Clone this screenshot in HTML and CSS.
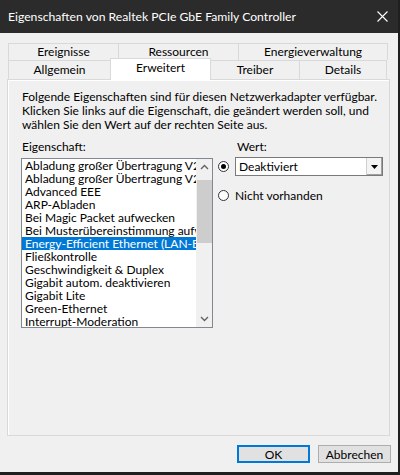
FILE: index.html
```html
<!DOCTYPE html>
<html lang="de">
<head>
  <meta charset="UTF-8" />
  <title>Eigenschaften von Realtek PCIe GbE Family Controller</title>
  <link rel="stylesheet" href="styles.css">
</head>
<body>
  <div class="window">

    <!-- TITLE BAR -->
    <div class="titlebar">
      <span class="title">Eigenschaften von Realtek PCIe GbE Family Controller</span>
      <svg class="close" width="11" height="11" viewBox="0 0 11 11">
        <path d="M0.5 0.5 L10.5 10.5 M10.5 0.5 L0.5 10.5" stroke="#fff" stroke-width="1.1" fill="none"/>
      </svg>
    </div>

    <div class="content">
      <!-- TABS -->
      <div class="tabs">
        <div class="tab-row row-back">
          <div class="tab" style="width:110px">Ereignisse</div>
          <div class="tab" style="width:120px">Ressourcen</div>
          <div class="tab last" style="width:150px">Energieverwaltung</div>
        </div>
        <div class="tab-row row-front">
          <div class="tab" style="width:102px">Allgemein</div>
          <div class="tab selected" style="width:101px">Erweitert</div>
          <div class="tab" style="width:89px">Treiber</div>
          <div class="tab last" style="width:88px">Details</div>
        </div>
      </div>

      <!-- PAGE -->
      <div class="panel">
        <p class="desc">Folgende Eigenschaften sind für diesen Netzwerkadapter verfügbar.<br>
Klicken Sie links auf die Eigenschaft, die geändert werden soll, und<br>
wählen Sie den Wert auf der rechten Seite aus.</p>

        <div class="props">
          <div class="col-left">
            <div class="label">Eigenschaft:</div>
            <div class="listbox">
              <ul class="items">
                <li>Abladung großer Übertragung V2 (IPv4)</li>
                <li>Abladung großer Übertragung V2 (IPv6)</li>
                <li>Advanced EEE</li>
                <li>ARP-Abladen</li>
                <li>Bei Magic Packet aufwecken</li>
                <li>Bei Musterübereinstimmung aufwecken</li>
                <li class="sel">Energy-Efficient Ethernet (LAN-Energiesparmodus)</li>
                <li>Fließkontrolle</li>
                <li>Geschwindigkeit &amp; Duplex</li>
                <li>Gigabit autom. deaktivieren</li>
                <li>Gigabit Lite</li>
                <li>Green-Ethernet</li>
                <li>Interrupt-Moderation</li>
              </ul>
              <div class="scrollbar">
                <svg class="arrow" width="9" height="6" viewBox="0 0 9 6">
                  <path d="M1 5 L4.5 1.5 L8 5" stroke="#606060" stroke-width="1.3" fill="none"/>
                </svg>
                <div class="track"><div class="thumb"></div></div>
                <svg class="arrow" width="9" height="6" viewBox="0 0 9 6">
                  <path d="M1 1 L4.5 4.5 L8 1" stroke="#606060" stroke-width="1.3" fill="none"/>
                </svg>
              </div>
            </div>
          </div>

          <div class="col-right">
            <div class="label value-label">Wert:</div>
            <div class="option">
              <span class="radio checked"></span>
              <div class="combo">
                <span class="combo-text">Deaktiviert</span>
                <span class="combo-btn">
                  <svg width="7" height="4" viewBox="0 0 7 4"><path d="M0 0 H7 L3.5 4 Z" fill="#000"/></svg>
                </span>
              </div>
            </div>
            <div class="option second">
              <span class="radio"></span>
              <span>Nicht vorhanden</span>
            </div>
          </div>
        </div>
      </div>

      <!-- BUTTONS -->
      <div class="buttons">
        <button class="btn default">OK</button>
        <button class="btn">Abbrechen</button>
      </div>
    </div>
  </div>
</body>
</html>
```

FILE: styles.css
```css
/* BASE */
*, *::before, *::after { box-sizing: border-box; }
body {
  margin: 0;
  background: #1f1f1f;
  font-family: "Segoe UI", Lato, sans-serif;
  font-size: 12px;
  color: #000;
}

.window {
  width: 398px;
  height: 472px;
  background: #f0f0f0;
  display: flex;
  flex-direction: column;
}

/* TITLE BAR */
.titlebar {
  height: 33px;
  flex-shrink: 0;
  background: #2b2b2b;
  color: #fff;
  display: flex;
  align-items: center;
  justify-content: space-between;
  padding: 0 10px 0 8px;
  font-size: 12.2px;
}

.content {
  flex: 1;
  display: flex;
  flex-direction: column;
  padding: 10px 7px 0 7px;
}

/* TABS */
.tabs { margin-left: 1px; }
.tab-row { display: flex; }
.row-back { height: 17px; }
.row-front { height: 19px; }
.tab {
  border: 1px solid #d9d9d9;
  border-right: none;
  border-bottom: none;
  background: #f0f0f0;
  text-align: center;
  line-height: 16px;
}
.row-front .tab { line-height: 18px; }
.tab.last { border-right: 1px solid #d9d9d9; }
.tab.selected {
  position: relative;
  z-index: 1;
  align-self: flex-start;
  height: 22px;
  margin-top: -2px;
  background: #fff;
  border-right: 1px solid #d9d9d9;
  margin-right: -1px;
  line-height: 18px;
}

/* PAGE */
.panel {
  width: 383px;
  height: 357px;
  border: 1px solid #d9d9d9;
  box-shadow: inset 1px 1px 0 #fff;
  padding: 10px 13px;
}
.desc {
  margin: 0;
  white-space: nowrap;
  line-height: 14px;
  padding-left: 1px;
}

.props {
  display: flex;
  gap: 5px;
  margin-top: 8px;
}
.label { line-height: 14px; height: 18px; padding-left: 1px; }

/* LIST BOX */
.listbox {
  width: 192px;
  height: 170px;
  border: 1px solid #828790;
  background: #fff;
  display: flex;
}
.items {
  list-style: none;
  margin: 0;
  padding: 0;
  flex: 1;
  overflow: hidden;
}
.items li {
  height: 13px;
  line-height: 13px;
  padding-left: 3px;
  white-space: nowrap;
  overflow: hidden;
}
.items li.sel { background: #0078d7; color: #fff; }

.scrollbar {
  width: 16px;
  background: #f0f0f0;
  display: flex;
  flex-direction: column;
  align-items: center;
}
.scrollbar .arrow { margin: 5px 0; }
.track { flex: 1; width: 100%; padding-top: 5px; }
.thumb { width: 15px; height: 63px; margin-left: 1px; background: #cdcdcd; }

/* VALUE COLUMN */
.col-right { flex: 1; }
.value-label { padding-left: 19px; }
.option {
  display: flex;
  align-items: center;
  gap: 6px;
  margin-top: -1px;
}
.option.second { margin-top: 12px; }
.radio {
  width: 11px;
  height: 11px;
  border: 1px solid #333;
  border-radius: 50%;
  background: #fff;
  display: flex;
  align-items: center;
  justify-content: center;
  flex-shrink: 0;
}
.radio.checked::after {
  content: "";
  width: 5px;
  height: 5px;
  border-radius: 50%;
  background: #000;
}
.combo {
  width: 148px;
  height: 19px;
  border: 1px solid #7a7a7a;
  background: #fff;
  display: flex;
  align-items: center;
  justify-content: space-between;
}
.combo-text { padding-left: 3px; }
.combo-btn {
  width: 16px;
  height: 17px;
  border-left: 1px solid #d0d0d0;
  box-shadow: inset -1px -1px 0 #a0a0a0;
  background: #f4f4f4;
  display: flex;
  align-items: center;
  justify-content: center;
}

/* BUTTONS */
.buttons {
  display: flex;
  justify-content: flex-end;
  gap: 8px;
  margin-top: 9px;
}
.btn {
  width: 73px;
  height: 18px;
  font: inherit;
  padding: 0;
  background: #e1e1e1;
  border: 1px solid #adadad;
  color: #000;
}
.btn.default { border: 2px solid #0078d7; }
```
